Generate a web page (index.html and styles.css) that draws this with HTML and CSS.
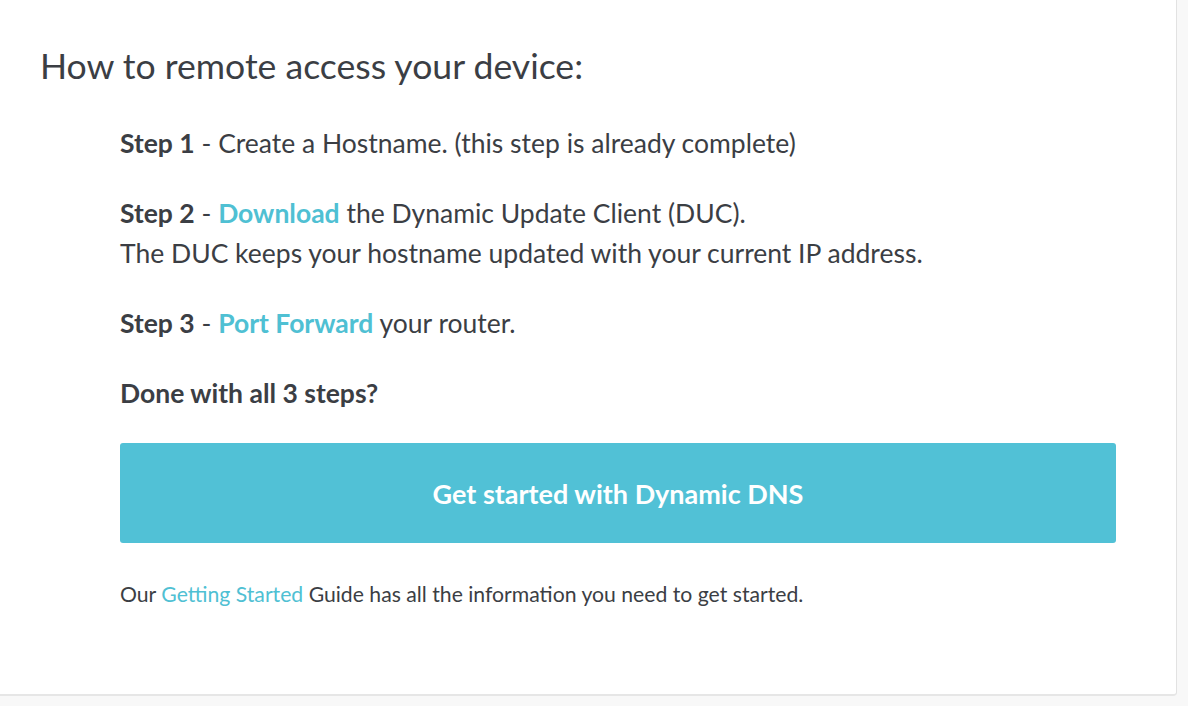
FILE: index.html
```html
<!DOCTYPE html>
<html lang="en">
<head>
<meta charset="utf-8">
<title>How to remote access your device</title>
<link rel="stylesheet" href="styles.css">
</head>
<body>
<div class="page">
  <section class="card">
    <h2 class="title">How to remote access your device:</h2>
    <div class="steps">
      <p class="step"><strong>Step 1</strong> - Create a Hostname. (this step is already complete)</p>
      <p class="step"><strong>Step 2</strong> - <a class="link" href="#">Download</a> the Dynamic Update Client (DUC).<br>The DUC keeps your hostname updated with your current IP address.</p>
      <p class="step"><strong>Step 3</strong> - <a class="link" href="#">Port Forward</a> your router.</p>
      <p class="step"><strong>Done with all 3 steps?</strong></p>
      <a class="btn" href="#">Get started with Dynamic DNS</a>
      <p class="note">Our <a class="link link-normal" href="#">Getting Started</a> Guide has all the information you need to get started.</p>
    </div>
  </section>
</div>
</body>
</html>
```
FILE: styles.css
```css
html, body {
  margin: 0;
  padding: 0;
  background: #f8f8f8;
}
body {
  font-family: "Lato", "Source Sans Pro", "Open Sans", sans-serif;
  color: #3b3e44;
  width: 1188px;
  height: 706px;
  overflow: hidden;
}
.page {
  display: flex;
}
.card {
  box-sizing: border-box;
  width: 1177px;
  height: 696px;
  background: #ffffff;
  border-right: 1px solid #e2e2e2;
  border-bottom: 2px solid #e6e6e6;
  border-bottom-right-radius: 4px;
  padding: 45px 0 0 40px;
}
.title {
  margin: 0;
  font-weight: 400;
  font-size: 35.6px;
  line-height: 42px;
  color: #3b3e44;
}
.steps {
  padding: 36px 60px 0 80px;
  display: flex;
  flex-direction: column;
}
.step {
  margin: 0 0 30px;
  font-size: 26.5px;
  line-height: 40px;
}
.step strong {
  font-weight: 700;
}
.link {
  color: #4fc0d3;
  text-decoration: none;
  font-weight: 700;
}
.link-normal {
  font-weight: 400;
}
.btn {
  display: flex;
  align-items: center;
  justify-content: center;
  height: 100px;
  background: #51c1d6;
  border-radius: 3px;
  color: #ffffff;
  font-size: 27px;
  font-weight: 700;
  text-decoration: none;
}
.note {
  margin: 36px 0 0;
  font-size: 21.2px;
  line-height: 30px;
}
```
